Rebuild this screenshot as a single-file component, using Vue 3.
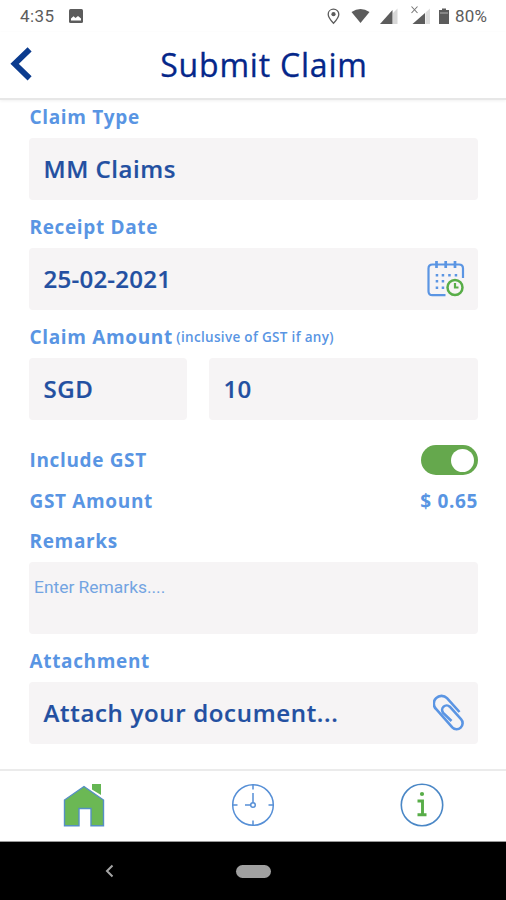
<script setup>
import { ref } from 'vue'

const includeGst = ref(true)
const dots = [
  [9, 14], [15, 14], [21.5, 14], [28, 14],
  [9, 20], [15, 20],
  [9, 26.5], [15, 26.5],
]
</script>

<template>
  <div class="screen">
    <div class="status">
      <span class="time">4:35</span>
      <svg class="photo" width="14" height="14" viewBox="0 0 14 14">
        <rect width="14" height="14" rx="1.5" fill="#5c5c5c" />
        <path d="M2 11.5V9.5L4.5 7.2L6.5 9L9 7L12 9.5V11.5Z" fill="#fff" />
      </svg>
      <svg class="indicators" width="126" height="20" viewBox="0 0 126 20">
        <path d="M6.500 1.200C3.500 1.200 1.200 3.300 1.200 6.200C1.200 9.600 6.500 15.300 6.500 15.300S11.800 9.600 11.800 6.200C11.800 3.300 9.500 1.200 6.500 1.200Z" fill="none" stroke="#5c5c5c" stroke-width="1.300" />
        <circle cx="6.500" cy="6.200" r="2.100" fill="#5c5c5c" />
        <path d="M24.500 4Q33.500 -2 42.500 4L33.500 15Z" fill="#5c5c5c" />
        <path d="M65.500 2V16H53Z" fill="#5c5c5c" />
        <path d="M70.500 0.500V16H66V5Z" fill="#d8d8d8" />
        <path d="M98 5V16H85.500Z" fill="#5c5c5c" />
        <path d="M98.500 4.500L103 0.500V16H98.500Z" fill="#dedede" />
        <path d="M84.500 -1.500L90.500 5M90.500 -1.500L84.500 5" stroke="#777" stroke-width="1.100" />
        <path d="M115 0.500H119V2H122V16H112V2H115Z" fill="#5c5c5c" />
        <path d="M113 5H121" stroke="#a4a4a4" stroke-width="1.200" />
      </svg>
      <span class="percent">80%</span>
    </div>

    <header class="header">
      <svg class="back" width="22" height="36" viewBox="0 0 22 36">
        <path d="M19.600 2.300L4.600 16.800L19.600 31.300" fill="none" stroke="#0b3b8e" stroke-width="5.800" />
      </svg>
      <h1 class="title">Submit Claim</h1>
    </header>

    <main class="form">
      <section class="group">
        <div class="label">Claim Type</div>
        <div class="box"><span>MM Claims</span></div>
      </section>

      <section class="group">
        <div class="label">Receipt Date</div>
        <div class="box">
          <span class="digits">25-02-2021</span>
          <svg class="calendar" width="38" height="38" viewBox="0 0 38 38">
            <path d="M18.500 35.200H5.500Q1.500 35.200 1.500 31.200V8.500Q1.500 4.500 5.500 4.500H32Q36 4.500 36 8.500V18" fill="none" stroke="#5b95e3" stroke-width="2.200" />
            <path d="M9.500 1V8M18.700 1V8M28 1V8" stroke="#5b95e3" stroke-width="2.700" />
            <rect v-for="(d, i) in dots" :key="i" :x="d[0] - 0.3" :y="d[1]" width="2.500" height="2.500" fill="#5b95e3" />
            <circle cx="28" cy="27.500" r="7.500" fill="#f6f4f5" stroke="#58ad48" stroke-width="2.500" />
            <path d="M28 23V27.500H31.500" fill="none" stroke="#58ad48" stroke-width="2.200" />
          </svg>
        </div>
      </section>

      <section class="group">
        <div class="label">
          <span>Claim Amount</span>
          <span class="hint">(inclusive of GST if any)</span>
        </div>
        <div class="pair">
          <div class="box currency"><span>SGD</span></div>
          <div class="box"><span class="digits">10</span></div>
        </div>
      </section>

      <div class="row gst">
        <span>Include GST</span>
        <button class="toggle" :class="{ on: includeGst }" aria-label="Include GST" @click="includeGst = !includeGst">
          <span class="knob"></span>
        </button>
      </div>
      <div class="row amount">
        <span>GST Amount</span>
        <span>$ 0.65</span>
      </div>

      <section class="group remarks">
        <div class="label">Remarks</div>
        <textarea class="area" placeholder="Enter Remarks...."></textarea>
      </section>

      <section class="group">
        <div class="label">Attachment</div>
        <div class="box">
          <span class="attach">Attach your document...</span>
          <svg class="clip" width="32" height="38" viewBox="0 0 32 38">
            <path d="M26.500 18L14 4.200A7.600 7.600 0 0 0 3 15L19.300 33.300A5.900 5.900 0 0 0 28 25.200L16.800 12.700A4.500 4.500 0 0 0 10.200 18.800L18.500 27" fill="none" stroke="#5b95e3" stroke-width="2.600" />
          </svg>
        </div>
      </section>
    </main>

    <nav class="tabs">
      <svg width="44" height="46" viewBox="0 0 44 46">
        <path d="M30 1H39V12L30 6.500Z" fill="#65b653" />
        <path d="M22 3.500L2.500 17V42.700H17V25.500H29V42.700H41.500V17Z" fill="#6bb854" stroke="#568fc4" stroke-width="1.400" />
      </svg>
      <svg width="44" height="46" viewBox="0 0 44 46">
        <circle cx="22" cy="22" r="20.300" fill="none" stroke="#568fd6" stroke-width="1.500" />
        <path d="M22 1.500V6.500M22 37.500V42.500M1.500 22H6.500M37.500 22H42.500M22 10V19.500M14 22H19.500" stroke="#568fd6" stroke-width="1.500" />
        <circle cx="22" cy="22" r="2.300" fill="none" stroke="#568fd6" stroke-width="1.500" />
      </svg>
      <svg width="44" height="46" viewBox="0 0 44 46">
        <circle cx="22" cy="22" r="20.700" fill="none" stroke="#4a87c6" stroke-width="1.600" />
        <circle cx="22" cy="11" r="2.100" fill="#58ad48" />
        <path d="M17.500 18H22.500V31.500M17.500 31.700H26.500" fill="none" stroke="#58ad48" stroke-width="2.900" />
      </svg>
    </nav>

    <footer class="system">
      <svg class="sysback" width="9" height="14" viewBox="0 0 9 14">
        <path d="M7.500 1.500L2 7L7.500 12.500" fill="none" stroke="#a5a5a5" stroke-width="2" />
      </svg>
      <span class="pill"></span>
    </footer>
  </div>
</template>

<style>
body {
  margin: 0;
  background: #fff;
}
</style>

<style scoped>
.screen {
  width: 506px;
  height: 900px;
  display: flex;
  flex-direction: column;
  overflow: hidden;
  background: #fff;
  font-family: "Open Sans", sans-serif;
}
.screen * {
  box-sizing: border-box;
}
.status {
  height: 32px;
  display: flex;
  align-items: center;
  padding: 0 18px 0 20px;
  color: #5c5c5c;
  font: 17px/32px Roboto, sans-serif;
}
.time {
  width: 49px;
  letter-spacing: 0.4px;
}
.photo {
  margin-top: -1px;
}
.indicators {
  margin-left: auto;
  margin-right: 2px;
  margin-top: 3px;
  overflow: visible;
}
.percent {
  width: 33px;
  white-space: nowrap;
  letter-spacing: 0.2px;
}
.header {
  height: 68px;
  display: grid;
  grid-template-columns: 53px 1fr 31px;
  align-items: center;
  border-bottom: 2px solid #e7e7e7;
  box-shadow: 0 1px 3px rgba(0, 0, 0, 0.06);
}
.back {
  margin-left: 10px;
}
.title {
  margin: 0;
  text-align: center;
  font-size: 32px;
  line-height: 66px;
  font-weight: 500;
  color: #05278a;
  letter-spacing: 0.8px;
  -webkit-text-stroke: 0.3px #05278a;
}
.form {
  padding: 0 28px 0 29px;
  height: 669px;
}
.group {
  margin-bottom: 10px;
}
.label {
  height: 34px;
  margin-bottom: 4px;
  display: flex;
  align-items: center;
  gap: 3.5px;
}
.label,
.row {
  padding-left: 0.5px;
  color: #5995e3;
  font-size: 19px;
  font-weight: 700;
  letter-spacing: 0.65px;
  white-space: nowrap;
}
.hint {
  font-size: 13.5px;
  font-weight: 600;
  letter-spacing: 0.32px;
}
.box {
  height: 62px;
  display: flex;
  align-items: center;
  justify-content: space-between;
  padding: 0 13px 0 14.5px;
  border-radius: 4px;
  background: #f6f4f5;
  color: #2350a1;
  font-size: 24px;
  font-weight: 600;
  letter-spacing: 0.55px;
  -webkit-text-stroke: 0.2px #2350a1;
  flex: 1;
}
.box span {
  padding-bottom: 1px;
}
.box .digits {
  letter-spacing: 0.25px;
}
.box .attach {
  letter-spacing: 0.68px;
}
.pair {
  display: flex;
  gap: 22px;
}
.currency {
  flex: 0 0 158px;
}
.row {
  display: flex;
  align-items: center;
  justify-content: space-between;
}
.gst {
  height: 40px;
  margin-top: 20px;
}
.amount {
  height: 42px;
}
.remarks {
  margin-top: 2px;
}
.toggle {
  width: 57px;
  height: 30px;
  border: 0;
  padding: 3px 4px;
  border-radius: 15px;
  display: flex;
  align-items: center;
  background: #b9b9b9;
}
.toggle.on {
  justify-content: flex-end;
  background: #65a84d;
}
.knob {
  width: 23px;
  height: 23px;
  border-radius: 50%;
  background: #fff;
}
.area {
  display: block;
  width: 100%;
  height: 72px;
  border: 0;
  outline: 0;
  resize: none;
  padding: 14px 5px;
  border-radius: 4px;
  background: #f6f4f5;
  color: #2350a1;
  font: 17.4px/22px Roboto, sans-serif;
}
.area::placeholder {
  color: #73a4e2;
  opacity: 1;
}
.tabs {
  height: 73px;
  border-top: 2px solid #ebebeb;
  border-bottom: 1px solid #999;
  display: grid;
  grid-template-columns: repeat(3, 1fr);
  place-items: center;
}
.system {
  height: 58px;
  background: #000;
  display: grid;
  grid-template-columns: 105px 131px 1fr;
  align-items: center;
}
.sysback {
  grid-column: 2;
}
.pill {
  width: 35px;
  height: 13px;
  border-radius: 7px;
  background: #a0a0a0;
}
</style>
